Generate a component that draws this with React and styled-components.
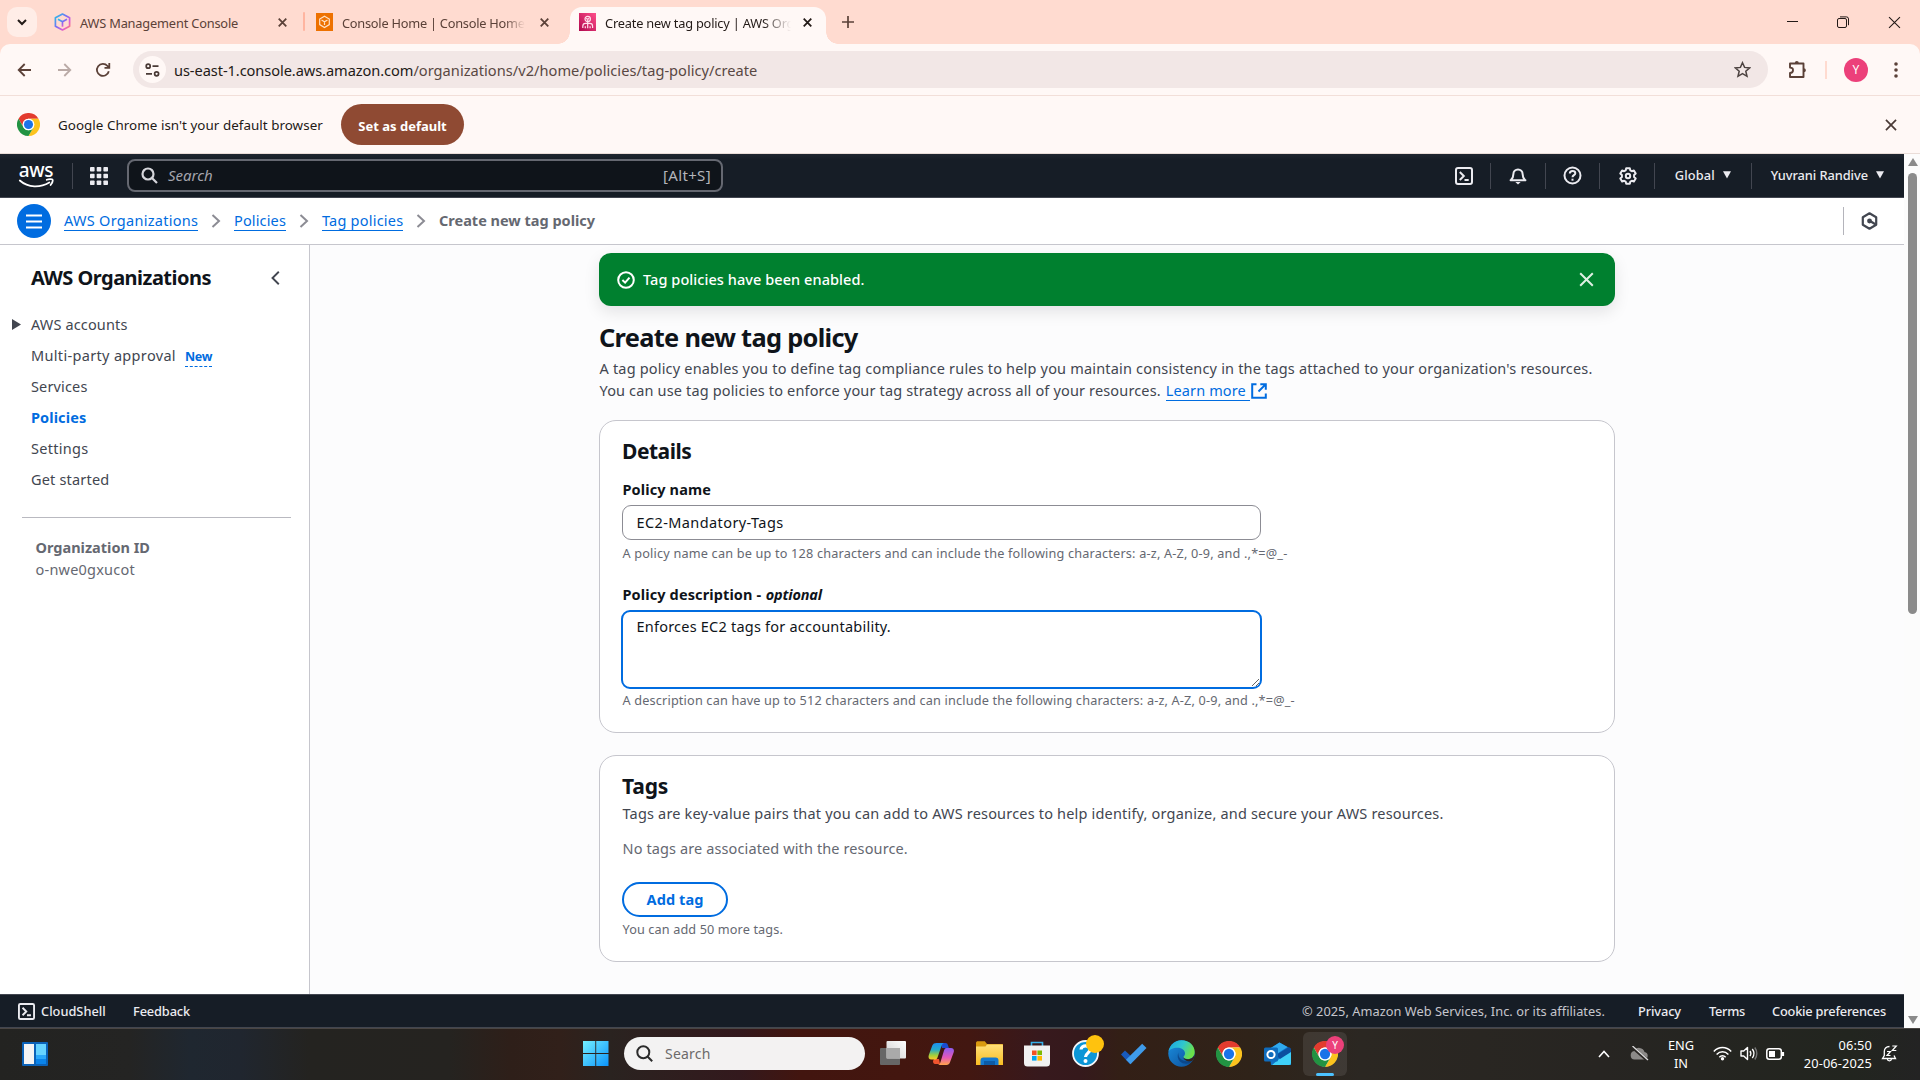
import React from 'react';
import styled, { createGlobalStyle, css } from 'styled-components';

const GlobalStyle = createGlobalStyle`
  * { box-sizing: border-box; }
  html, body { margin: 0; padding: 0; overflow: hidden; }
  body { font-family: "Noto Sans", "Open Sans", sans-serif; color: #0f141a; }
  svg { display: block; flex: none; }
  h1, h2, p { margin: 0; }
  button, input, textarea { font-family: inherit; }
`;

const Screen = styled.div`
  width: 1920px;
  height: 1080px;
  display: flex;
  flex-direction: column;
  overflow: hidden;
  background: #fff;
`;

/* ---------- Browser chrome ---------- */
const BrowserHead = styled.header`
  flex: none;
  background: #ffdbd0;
`;

const TabStrip = styled.div`
  height: 44px;
  display: flex;
  align-items: flex-start;
  padding-left: 7px;
`;

const TabSearch = styled.button`
  width: 30px;
  height: 30px;
  margin: 7px 0 0;
  padding: 0;
  border: 0;
  border-radius: 10px;
  background: #ffede7;
  display: grid;
  place-items: center;
`;

const Tab = styled.div`
  position: relative;
  display: flex;
  align-items: center;
  width: ${p => p.$width}px;
  height: 37px;
  margin-top: 7px;
  padding: 0 10px 7px ${p => p.$pad}px;
  border-radius: 12px 12px 0 0;
  background: ${p => (p.$active ? '#fff8f6' : 'transparent')};
  ${p => p.$active && css`
    &::before, &::after {
      content: '';
      position: absolute;
      bottom: 0;
      width: 12px;
      height: 12px;
    }
    &::before { left: -12px; background: radial-gradient(circle at 0 0, transparent 11.5px, #fff8f6 12px); }
    &::after { right: -12px; background: radial-gradient(circle at 100% 0, transparent 11.5px, #fff8f6 12px); }
  `}
`;

const TabTitle = styled.span`
  flex: none;
  width: ${p => p.$width}px;
  margin-left: 9px;
  white-space: nowrap;
  font-size: 12.8px;
  line-height: 20px;
  letter-spacing: ${p => p.$ls}px;
  padding-top: 1px;
  color: ${p => (p.$active ? '#231a17' : '#5b4138')};
  ${p => p.$fade && css`
    mask-image: linear-gradient(to right, #000 calc(100% - ${p.$fade}px), transparent);
  `}
`;

const TabClose = styled.span`
  margin-left: ${p => p.$gap}px;
`;

const TabDivider = styled.i`
  width: 2px;
  height: 19px;
  margin-top: 12px;
  border-radius: 1px;
  background: #ffb5a0;
`;

const NewTab = styled.span`
  margin: 16px 0 0 16px;
`;

const WindowButtons = styled.div`
  display: flex;
  align-items: center;
  gap: 38px;
  height: 44px;
  margin-left: auto;
  padding-right: 19px;
`;

const Toolbar = styled.div`
  height: 52px;
  display: flex;
  align-items: center;
  padding: 0 14px 0 16px;
  border-radius: 10px 10px 0 0;
  background: #fff8f6;
  border-bottom: 1px solid #f2dfd9;
`;

const NavButtons = styled.div`
  display: flex;
  gap: 21px;
`;

const AddressBar = styled.div`
  display: flex;
  flex: none;
  align-items: center;
  width: 1635px;
  height: 37px;
  margin-left: 21px;
  padding: 0 17px 0 6px;
  border-radius: 19px;
  background: #f2e7e6;
`;

const SiteChip = styled.span`
  width: 27px;
  height: 27px;
  border-radius: 50%;
  background: #fff8f6;
  display: grid;
  place-items: center;
`;

const Address = styled.span`
  flex: 1;
  margin-left: 8px;
  white-space: nowrap;
  font-size: 14.6px;
  line-height: 22px;
  letter-spacing: -0.07px;
  color: #231a17;
`;

const AddressPath = styled.span`
  letter-spacing: 0.03px;
  color: #594743;
`;

const ToolbarEnd = styled.div`
  display: flex;
  align-items: center;
  margin-left: 20px;
`;

const ToolbarDivider = styled.i`
  width: 2px;
  height: 18px;
  margin-left: 18px;
  background: #ffdbd0;
`;

const Avatar = styled.span`
  width: 24px;
  height: 24px;
  margin-left: 17px;
  margin-right: 18px;
  border-radius: 50%;
  background: #ec407a;
  color: #fff;
  font-size: 12px;
  line-height: 24px;
  text-align: center;
`;

const InfoBar = styled.div`
  display: flex;
  align-items: center;
  height: 58px;
  padding: 0 23px 0 17px;
  background: #fff8f6;
  border-bottom: 1px solid #eaddd8;
`;

const InfoText = styled.span`
  width: 266px;
  margin-left: 18px;
  white-space: nowrap;
  font-size: 13.4px;
  letter-spacing: 0.04px;
  color: #231a17;
`;

const DefaultButton = styled.button`
  width: 123px;
  height: 41px;
  margin-left: 17px;
  margin-right: auto;
  padding: 2px 0 0;
  border: 0;
  border-radius: 21px;
  background: #8f4a33;
  color: #fff;
  font-size: 13px;
  font-weight: 700;
  letter-spacing: 0;
`;

/* ---------- Console ---------- */
const Viewport = styled.div`
  height: 874px;
  flex: none;
  display: flex;
`;

const Console = styled.div`
  width: 1904px;
  display: flex;
  flex-direction: column;
`;

const ScrollTrack = styled.div`
  width: 16px;
  display: flex;
  flex-direction: column;
  align-items: center;
  padding: 4px 0 4px 1px;
  background: #fcfcfc;
`;

const ScrollThumb = styled.div`
  width: 9px;
  height: 441px;
  margin: 7px 0 auto;
  border-radius: 5px;
  background: #8b8b8b;
`;

const GlobalNav = styled.nav`
  height: 44px;
  flex: none;
  display: flex;
  align-items: center;
  background: linear-gradient(#1f2630, #161d26 6px);
  border-bottom: 1px solid #424650;
  padding-left: 18px;
  color: #ebebf0;
`;

const Logo = styled.div`
  width: 36px;
  height: 30px;
  display: flex;
  flex-direction: column;
  align-items: center;
  font-size: 19px;
  font-weight: 500;
  line-height: 18px;
  letter-spacing: -0.3px;
  color: #fff;
`;

const LogoSmile = styled.svg`
  margin-top: -1px;
`;

const NavDivider = styled.i`
  width: 1px;
  height: 26px;
  background: #424650;
  margin: 0 ${p => p.$right}px 0 ${p => p.$left}px;
`;

const SearchBox = styled.div`
  display: flex;
  align-items: center;
  width: 596px;
  height: 33px;
  margin-left: 19px;
  padding: 0 10px 0 12px;
  border: 2px solid #656871;
  border-radius: 8px;
  background: #0f141a;
`;

const SearchHint = styled.em`
  flex: 1;
  margin: 0 0 2px 10px;
  font-size: 15px;
  line-height: 22px;
  color: #a4a4ad;
`;

const SearchKey = styled.span`
  margin-bottom: 2px;
  font-size: 15px;
  line-height: 22px;
  letter-spacing: 0.35px;
  color: #b4b4bb;
`;

const NavEnd = styled.div`
  display: flex;
  align-items: center;
  margin-left: auto;
  padding-right: 20px;
`;

const NavMenu = styled.span`
  display: flex;
  align-items: center;
  gap: 8px;
  margin-bottom: 2px;
  white-space: nowrap;
  font-size: 12.8px;
  line-height: 20px;
  font-weight: 500;
  letter-spacing: ${p => p.$ls}px;
`;

const BreadcrumbBar = styled.div`
  height: 47px;
  flex: none;
  display: flex;
  align-items: center;
  padding: 0 26px 0 17px;
  background: #fff;
  border-bottom: 1px solid #c6c6cd;
`;

const MenuButton = styled.button`
  width: 34px;
  height: 34px;
  margin-right: 13px;
  padding: 0;
  border: 0;
  border-radius: 50%;
  background: #006ce0;
  display: grid;
  place-items: center;
`;

const Crumb = styled.a`
  width: ${p => p.$width}px;
  white-space: nowrap;
  font-size: 14.5px;
  line-height: 20px;
  letter-spacing: ${p => p.$ls}px;
  color: #006ce0;
  border-bottom: 1px solid #006ce0;
  margin-bottom: 1px;
`;

const CrumbCurrent = styled.span`
  margin-bottom: 2px;
  font-size: 14.5px;
  line-height: 22px;
  font-weight: 700;
  color: #656871;
`;

const CrumbArrow = styled.svg`
  margin: 0 13px;
`;

const HelpSlot = styled.div`
  display: flex;
  align-items: center;
  height: 28px;
  margin-left: auto;
  padding-left: 17px;
  border-left: 1px solid #b4b4bb;
`;

const Body = styled.div`
  flex: 1;
  min-height: 0;
  display: flex;
`;

const Sidebar = styled.aside`
  width: 310px;
  flex: none;
  padding-top: 20px;
  background: #fff;
  border-right: 1px solid #c6c6cd;
`;

const SidebarHead = styled.div`
  display: flex;
  align-items: center;
  justify-content: space-between;
  height: 26px;
  margin-bottom: 17px;
  padding: 0 29px 0 31px;
`;

const SidebarTitle = styled.h2`
  font-size: 20px;
  line-height: 26px;
  letter-spacing: -0.52px;
  white-space: nowrap;
`;

const NavItem = styled.div`
  display: flex;
  align-items: center;
  height: 31px;
  padding-left: ${p => (p.$expandable ? 12 : 31)}px;
  font-size: 14.5px;
  letter-spacing: ${p => p.$ls}px;
  font-weight: ${p => (p.$active ? 700 : 400)};
  color: ${p => (p.$active ? '#006ce0' : '#424650')};
  svg { margin: 2px 10px 0 0; }
`;

const NewBadge = styled.span`
  margin-left: 9px;
  margin-top: 5px;
  font-size: 12.5px;
  line-height: 17px;
  font-weight: 700;
  letter-spacing: -0.3px;
  color: #006ce0;
  border-bottom: 1px dashed #006ce0;
  padding-bottom: 1px;
`;

const SidebarRule = styled.hr`
  width: 269px;
  height: 1px;
  margin: 23px 0 18px 22px;
  border: 0;
  background: #b9b9c0;
`;

const OrgInfo = styled.div`
  padding-left: 35.5px;
  font-size: 14.5px;
  line-height: 22px;
  color: #656871;
  span { letter-spacing: 0.22px; }
`;

const Main = styled.main`
  flex: 1;
  display: flex;
  flex-direction: column;
  padding: 8px 289px 0;
  background: #fcfcfd;
`;

const Flash = styled.div`
  display: flex;
  align-items: center;
  height: 53px;
  flex: none;
  padding: 0 21px 0 18px;
  border-radius: 12px;
  background: #00802f;
  box-shadow: 0 6px 16px rgba(0, 7, 22, 0.1);
  color: #fff;
`;

const FlashText = styled.span`
  flex: 1;
  margin: 0 0 2px 8px;
  font-size: 14.5px;
  line-height: 22px;
  font-weight: 500;
  letter-spacing: 0.07px;
`;

const PageTitle = styled.h1`
  margin-top: 16px;
  font-size: 25.4px;
  line-height: 30px;
  letter-spacing: -0.7px;
`;

const PageIntro = styled.p`
  height: 44px;
  margin-top: 5px;
  font-size: 14.5px;
  line-height: 22px;
  white-space: nowrap;
  color: #424650;
`;

const IntroLine = styled.span`
  display: flex;
  align-items: center;
  height: 22px;
  padding-left: 0.5px;
  letter-spacing: ${p => p.$ls}px;
  svg { margin-top: 2px; }
`;

const LearnMore = styled.a`
  width: 84px;
  height: 21px;
  margin: 0 1px 0 5px;
  line-height: 20px;
  letter-spacing: 0.12px;
  color: #006ce0;
  border-bottom: 1px solid #006ce0;
`;

const Card = styled.section`
  flex: none;
  height: ${p => p.$height}px;
  margin-top: ${p => p.$gap}px;
  padding: 16px 22px;
  border: 1px solid #c6c6cd;
  border-radius: 17px;
  background: #fff;
`;

const CardTitle = styled.h2`
  font-size: 21px;
  line-height: 28px;
  letter-spacing: ${p => p.$ls}px;
`;

const CardText = styled.p`
  margin-top: ${p => p.$gap}px;
  padding-left: 0.5px;
  font-size: 14.5px;
  line-height: 22px;
  letter-spacing: ${p => p.$ls}px;
  white-space: nowrap;
  color: ${p => (p.$muted ? '#656871' : '#424650')};
`;

const FieldLabel = styled.label`
  display: block;
  margin-top: ${p => p.$gap}px;
  padding-left: 0.5px;
  font-size: 14.5px;
  line-height: 22px;
  font-weight: 700;
  letter-spacing: 0.12px;
  em { margin-left: 0.5px; letter-spacing: -0.15px; }
`;

const TextInput = styled.input`
  display: block;
  width: 639px;
  height: 35px;
  margin-top: 5px;
  padding: 0 13.5px 2px;
  border: 1px solid #8c8c94;
  border-radius: 9px;
  outline: 0;
  background: #fff;
  color: #0f141a;
  font-size: 14.5px;
  letter-spacing: 0.4px;
`;

const TextArea = styled.textarea`
  display: block;
  width: 641px;
  height: 79px;
  margin: 5px 0 0 -1px;
  padding: 3px 13.5px;
  border: 2px solid #006ce0;
  border-radius: 9px;
  outline: 0;
  resize: both;
  background: #fff;
  color: #0f141a;
  font-size: 14.5px;
  line-height: 22px;
  letter-spacing: 0.22px;
`;

const Hint = styled.p`
  margin-top: ${p => p.$gap}px;
  padding-left: 0.5px;
  font-size: 12.7px;
  line-height: 18px;
  letter-spacing: ${p => p.$ls}px;
  white-space: nowrap;
  color: #656871;
`;

const AddButton = styled.button`
  display: block;
  width: 106px;
  height: 35px;
  margin-top: 23px;
  padding: 0 0 2px;
  border: 2px solid #006ce0;
  border-radius: 18px;
  background: #fff;
  color: #006ce0;
  font-size: 14.5px;
  font-weight: 700;
  letter-spacing: 0.1px;
`;

const ConsoleFooter = styled.footer`
  height: 34px;
  flex: none;
  display: flex;
  align-items: center;
  padding: 0 18px;
  background: #161d26;
  border-top: 1px solid #424650;
  border-bottom: 1px solid #424650;
  font-size: 12.8px;
  white-space: nowrap;
  color: #ebebf0;
`;

const FooterLink = styled.span`
  width: ${p => p.$width}px;
  margin-left: ${p => p.$gap}px;
  font-weight: 500;
  letter-spacing: ${p => p.$ls}px;
`;

const Copyright = styled.span`
  width: 303px;
  margin-left: auto;
  letter-spacing: 0.03px;
  color: #c6c6cd;
`;

/* ---------- Taskbar ---------- */
const Taskbar = styled.div`
  flex: 1;
  display: flex;
  align-items: center;
  border-top: 1px solid #4a4643;
  padding: 0 22px 2px 22px;
  color: #fff;
  background: linear-gradient(90deg, #232321 0, #242423 130px, #1f2730 190px, #20262f 240px, #242320 310px, #252320 450px,
    #2e1f19 510px, #31201a 560px, #2a2320 610px, #33191d 740px, #42150f 800px, #43160f 900px, #421711 970px,
    #37191d 1040px, #35191c 1080px, #331f16 1120px, #2f2319 1250px, #2b2722 1360px, #272522 1600px, #22251f 1850px, #232323 1920px);
`;

const TaskSearch = styled.div`
  display: flex;
  align-items: center;
  width: 241px;
  height: 33px;
  margin: 0 15px 0 15px;
  padding-left: 12px;
  border-radius: 17px;
  background: #f3f2f2;
  span { margin: 0 0 1px 12px; font-size: 14px; letter-spacing: 0.2px; color: #6c6a6a; }
`;

const Widgets = styled.div`
  width: 561px;
`;

const AppRow = styled.div`
  display: flex;
  align-items: center;
  gap: 22px;
`;

const AppSlot = styled.div`
  position: relative;
  width: 26px;
  height: 28px;
  display: grid;
  place-items: center;
`;

const ActiveApp = styled.div`
  position: relative;
  width: 44px;
  height: 44px;
  margin-left: -9px;
  padding-top: 9px;
  border-radius: 6px;
  background: rgba(255, 255, 255, 0.09);
  display: flex;
  flex-direction: column;
  align-items: center;
  justify-content: space-between;
`;

const ActiveLine = styled.i`
  width: 18px;
  height: 3px;
  border-radius: 2px;
  background: #4cc2ff;
`;

const AppBadge = styled.span`
  position: absolute;
  top: ${p => p.$top}px;
  right: ${p => p.$right}px;
  width: 18px;
  height: 18px;
  border-radius: 50%;
  background: ${p => p.$color};
  font-size: 10px;
  line-height: 18px;
  text-align: center;
`;

const Tray = styled.div`
  display: flex;
  align-items: center;
  margin-left: auto;
  white-space: nowrap;
`;

const TrayStack = styled.div`
  width: ${p => p.$width}px;
  margin: 0 ${p => p.$right}px 0 ${p => p.$left}px;
  font-size: 12.8px;
  line-height: 18px;
  letter-spacing: ${p => p.$ls || 0}px;
  text-align: ${p => p.$align};
`;

const TrayIcons = styled.div`
  display: flex;
  align-items: center;
  gap: 8px;
`;

/* ---------- Icons ---------- */
const Cross = ({ size, color, width = 2 }) => (
  <svg width={size} height={size} viewBox="0 0 10 10" stroke={color} strokeWidth={(width * 10) / size} fill="none">
    <path d="M.8.8l8.4 8.4M9.2.8L.8 9.2" />
  </svg>
);

const ChromeLogo = ({ size }) => (
  <svg width={size} height={size} viewBox="0 0 48 48">
    <circle cx="24" cy="24" r="23" fill="#fff" />
    <path d="M3.2 12A24 24 0 0 1 44.8 12H24a12 12 0 0 0-10.4 18z" fill="#e33b2e" />
    <path d="M44.8 12A24 24 0 0 1 24 48l10.4-18A12 12 0 0 0 24 12z" fill="#fcc31e" />
    <path d="M24 48A24 24 0 0 1 3.2 12l10.4 18a12 12 0 0 0 20.8 0z" fill="#229342" />
    <circle cx="24" cy="24" r="12" fill="#fff" />
    <circle cx="24" cy="24" r="9.5" fill="#1a73e8" />
  </svg>
);

const CubeIcon = () => (
  <svg width="17" height="18" viewBox="0 0 17 18" fill="none" stroke="url(#cube)" strokeWidth="1.7" strokeLinejoin="round">
    <defs>
      <linearGradient id="cube" x1="0" y1="0" x2="1" y2="1">
        <stop offset="0" stopColor="#1fc7e8" />
        <stop offset=".45" stopColor="#7a6cf5" />
        <stop offset=".75" stopColor="#e15cd0" />
        <stop offset="1" stopColor="#ff8a5c" />
      </linearGradient>
    </defs>
    <path d="M8.5 1L15.6 4.8v8.4L8.5 17l-7.1-3.8V4.8z" />
    <path d="M4 6.2l4.5 2.5L13 6.2M8.5 8.7v5.1" />
  </svg>
);

const ConsoleHomeIcon = () => (
  <svg width="17" height="18" viewBox="0 0 17 18">
    <rect width="17" height="18" fill="#ed7100" />
    <path d="M8.5 3.2l4.8 2.8v5.6l-4.8 2.9-4.8-2.9V6zM5.5 7l3 1.7 3-1.7M8.5 8.7v3.4" fill="none" stroke="#ffe2c7" strokeWidth="1.2" />
  </svg>
);

const OrganizationsIcon = () => (
  <svg width="17" height="18" viewBox="0 0 17 18">
    <defs>
      <linearGradient id="org" x1="0" y1="1" x2="1" y2="0">
        <stop offset="0" stopColor="#b0084d" />
        <stop offset="1" stopColor="#ff4f8b" />
      </linearGradient>
    </defs>
    <rect width="17" height="18" fill="url(#org)" />
    <g fill="none" stroke="#ffe0ec" strokeWidth="1.2">
      <circle cx="8.7" cy="6" r="2.7" />
      <path d="M7.2 5.4l1.5.8 1.5-.8M8.7 6.2v9M3.8 15v-1.8c0-1.8 1.2-2.8 2.8-2.8h4.2c1.6 0 2.8 1 2.8 2.8V15M6.3 15.3v-2.1M11.1 15.3v-2.1" />
    </g>
  </svg>
);

const ShellIcon = ({ size, radius = 2 }) => (
  <svg width={size} height={size} viewBox="0 0 18 18" fill="none" stroke="#ebebf0" strokeWidth="2">
    <rect x="1" y="1" width="16" height="16" rx={radius} />
    <path d="M4.8 5l4 4-4 4M9.5 13h4.2" />
  </svg>
);

const Caret = () => (
  <svg width="8" height="8" viewBox="0 0 8 8"><path d="M0 .3h8L4 7.6z" fill="#ebebf0" /></svg>
);

const Arrow = ({ flip }) => (
  <svg width="18" height="18" viewBox="0 0 18 18" fill="none" stroke={flip ? '#baaaa6' : '#5b4138'} strokeWidth="1.8">
    {flip ? <path d="M3 9h12M9.3 3l6 6-6 6" /> : <path d="M15 9H3M8.7 3l-6 6 6 6" />}
  </svg>
);

const Chevron = () => (
  <CrumbArrow width="10" height="14" viewBox="0 0 10 14" fill="none" stroke="#8c8c94" strokeWidth="2">
    <path d="M1.5 1L8 7l-6.5 6" />
  </CrumbArrow>
);

const GearIcon = () => (
  <svg width="18" height="18" viewBox="0 0 18 18" fill="none" stroke="#ebebf0" strokeWidth="2" strokeLinejoin="round">
    <path d="M7.2 1.2h3.6l.5 2.2 1.5.8 2.1-.7 1.8 3-1.6 1.5v2l1.6 1.5-1.8 3-2.1-.7-1.5.8-.5 2.2H7.2l-.5-2.2-1.5-.8-2.1.7-1.8-3L2.900 10V8L1.300 6.500l1.800-3 2.100.7 1.500-.8z" />
    <circle cx="9" cy="9" r="2.2" />
  </svg>
);

const tabs = [
  { title: 'AWS Management Console', icon: <CubeIcon />, width: 266, pad: 17, text: 166, gap: 32, ls: -0.18 },
  { title: 'Console Home | Console Home', icon: <ConsoleHomeIcon />, width: 265, pad: 11, text: 183, gap: 15, ls: -0.25, fade: 20 },
  { title: 'Create new tag policy | AWS Org', icon: <OrganizationsIcon />, width: 256, pad: 9, text: 186, gap: 12, ls: -0.2, fade: 28, active: true },
];

const navItems = [
  { label: 'AWS accounts', ls: 0.14, expandable: true },
  { label: 'Multi-party approval', ls: 0.33, badge: 'New' },
  { label: 'Services', ls: 0.15 },
  { label: 'Policies', ls: 0.1, active: true },
  { label: 'Settings', ls: 0.29 },
  { label: 'Get started', ls: 0.18 },
];

const BrowserChrome = () => (
  <BrowserHead>
    <TabStrip>
      <TabSearch>
        <svg width="10" height="7" viewBox="0 0 10 7" fill="none" stroke="#231a17" strokeWidth="2"><path d="M1 1l4 4 4-4" /></svg>
      </TabSearch>
      {tabs.map((t, i) => (
        <React.Fragment key={t.title}>
          {i === 1 && <TabDivider />}
          <Tab $width={t.width} $pad={t.pad} $active={t.active}>
            {t.icon}
            <TabTitle $width={t.text} $ls={t.ls} $fade={t.fade} $active={t.active}>{t.title}</TabTitle>
            <TabClose $gap={t.gap}><Cross size={9} width={1.8} color={t.active ? '#231a17' : '#5b4138'} /></TabClose>
          </Tab>
        </React.Fragment>
      ))}
      <NewTab>
        <svg width="12" height="12" viewBox="0 0 12 12" stroke="#5b4138" strokeWidth="1.7"><path d="M6 0v12M0 6h12" /></svg>
      </NewTab>
      <WindowButtons>
        <svg width="12" height="12" viewBox="0 0 12 12" stroke="#231a17"><path d="M0 5.5h11" /></svg>
        <svg width="13" height="13" viewBox="0 0 13 13" fill="none" stroke="#231a17"><rect x=".5" y="2.5" width="9" height="9" rx="1.5" /><path d="M3 .9h6.5a2 2 0 0 1 2 2v6.3" /></svg>
        <Cross size={13} width={1.1} color="#231a17" />
      </WindowButtons>
    </TabStrip>
    <Toolbar>
      <NavButtons>
        <Arrow />
        <Arrow flip />
        <svg width="18" height="18" viewBox="0 0 18 18" fill="none" stroke="#5b4138" strokeWidth="1.8">
          <path d="M14.8 10.2A6 6 0 1 1 13.5 5l1.3 1.5M15.3 2v4.8h-4.8" />
        </svg>
      </NavButtons>
      <AddressBar>
        <SiteChip>
          <svg width="15" height="14" viewBox="0 0 15 14" fill="none" stroke="#4a3a36" strokeWidth="1.7">
            <circle cx="3.2" cy="3.2" r="2" /><path d="M7.5 3.2h6M1 10.800h6" /><circle cx="11.6" cy="10.8" r="2" />
          </svg>
        </SiteChip>
        <Address>us-east-1.console.aws.amazon.com<AddressPath>/organizations/v2/home/policies/tag-policy/create</AddressPath></Address>
        <svg width="17" height="17" viewBox="0 0 17 17" fill="none" stroke="#4d4341" strokeWidth="1.5">
          <path d="M8.5 1.7l2.1 4.7 5.1.5-3.9 3.4 1.2 5-4.5-2.7L4 15.3l1.2-5L1.3 6.900l5.1-.5z" />
        </svg>
      </AddressBar>
      <ToolbarEnd>
        <svg width="19" height="19" viewBox="0 0 19 19" fill="none" stroke="#5b4138" strokeWidth="1.9" strokeLinejoin="round">
          <path d="M2 3.5h13.5v13.5H2v-4c2.600 0 3-1.200 3-2.700S4.600 7.600 2 7.600z" />
          <path d="M6.800 3.300a2 2.200 0 0 1 4 0zM15.700 8.200a2.200 2 0 0 1 0 4z" fill="#5b4138" stroke="none" />
        </svg>
        <ToolbarDivider />
        <Avatar>Y</Avatar>
        <svg width="20" height="16" viewBox="0 0 20 16" fill="#5b4138"><circle cx="10" cy="2" r="1.8" /><circle cx="10" cy="8" r="1.8" /><circle cx="10" cy="14" r="1.8" /></svg>
      </ToolbarEnd>
    </Toolbar>
    <InfoBar>
      <ChromeLogo size={23} />
      <InfoText>Google Chrome isn't your default browser</InfoText>
      <DefaultButton>Set as default</DefaultButton>
      <Cross size={12} width={1.7} color="#4a3a36" />
    </InfoBar>
  </BrowserHead>
);

const ConsoleNav = () => (
  <GlobalNav>
    <Logo>
      aws
      <LogoSmile width="36" height="11" viewBox="0 0 36 11" fill="none" stroke="#fff" strokeWidth="1.8" strokeLinecap="round">
        <path d="M1.800 2.500c8.600 7.600 20.500 7.300 29.500 2" />
        <path d="M28.800 1.800c2-.9 5.200-.9 5.600-.3.500.8-.2 3.500-1.800 5.500" />
      </LogoSmile>
    </Logo>
    <NavDivider $left={18} $right={17} />
    <svg width="18" height="18" viewBox="0 0 18 18" fill="#ebebf0">
      {[0, 6.7, 13.4].map(y => [0, 6.7, 13.4].map(x => <rect key={`${x}-${y}`} x={x} y={y} width="4.6" height="4.6" rx=".8" />))}
    </svg>
    <SearchBox>
      <svg width="17" height="17" viewBox="0 0 17 17" fill="none" stroke="#d5d5da" strokeWidth="2.2"><circle cx="7" cy="7" r="5.5" /><path d="M11 11l5 5" /></svg>
      <SearchHint>Search</SearchHint>
      <SearchKey>[Alt+S]</SearchKey>
    </SearchBox>
    <NavEnd>
      <ShellIcon size={18} />
      <NavDivider $left={17} $right={18} />
      <svg width="18" height="18" viewBox="0 0 18 18" fill="none" stroke="#ebebf0" strokeWidth="2" strokeLinejoin="round">
        <path d="M4.400 7a4.600 4.600 0 0 1 9.200 0c0 3.800 1 4.500 2.800 6.300H1.600C3.400 11.500 4.400 10.800 4.400 7z" /><path d="M6.300 15h5.400L9 17.600z" fill="#ebebf0" stroke="none" />
      </svg>
      <NavDivider $left={18} $right={17} />
      <svg width="19" height="19" viewBox="0 0 19 19" fill="none" stroke="#ebebf0" strokeWidth="2">
        <circle cx="9.5" cy="9.5" r="8" /><path d="M6.800 7.600c0-3.600 5.500-3.300 5.500-.3 0 2-2.800 1.800-2.800 4" /><path d="M9.500 12.700v2" />
      </svg>
      <NavDivider $left={17} $right={19} />
      <GearIcon />
      <NavDivider $left={17} $right={20} />
      <NavMenu $ls={0.1}>Global<Caret /></NavMenu>
      <NavDivider $left={20} $right={19} />
      <NavMenu $ls={-0.05}>Yuvrani Randive<Caret /></NavMenu>
    </NavEnd>
  </GlobalNav>
);

const Breadcrumbs = () => (
  <BreadcrumbBar>
    <MenuButton>
      <svg width="16" height="15" viewBox="0 0 16 15" stroke="#fff" strokeWidth="2"><path d="M0 1.500h16M0 7.500h16M0 13.500h16" /></svg>
    </MenuButton>
    <Crumb $width={134} $ls={0.29}>AWS Organizations</Crumb>
    <Chevron />
    <Crumb $width={52} $ls={0.14}>Policies</Crumb>
    <Chevron />
    <Crumb $width={81} $ls={0.22}>Tag policies</Crumb>
    <Chevron />
    <CrumbCurrent>Create new tag policy</CrumbCurrent>
    <HelpSlot>
      <svg width="17" height="18" viewBox="0 0 17 18" fill="none" stroke="#424650" strokeWidth="2.2" strokeLinejoin="round">
        <path d="M8.500 1.300l6.700 3.900v7.600l-6.700 3.900-6.700-3.900V5.200z" /><circle cx="8.5" cy="9" r="2.4" fill="#424650" stroke="none" /><path d="M9.500 9.300l4.800 2.900" />
      </svg>
    </HelpSlot>
  </BreadcrumbBar>
);

const SideNavigation = () => (
  <Sidebar>
    <SidebarHead>
      <SidebarTitle>AWS Organizations</SidebarTitle>
      <svg width="9" height="14" viewBox="0 0 9 14" fill="none" stroke="#424650" strokeWidth="1.9"><path d="M7.800.8L1.500 7l6.300 6.200" /></svg>
    </SidebarHead>
    {navItems.map(n => (
      <NavItem key={n.label} $ls={n.ls} $active={n.active} $expandable={n.expandable}>
        {n.expandable && <svg width="9" height="11" viewBox="0 0 9 11"><path d="M0 0l9 5.500L0 11z" fill="#424650" /></svg>}
        {n.label}
        {n.badge && <NewBadge>{n.badge}</NewBadge>}
      </NavItem>
    ))}
    <SidebarRule />
    <OrgInfo>
      <b>Organization ID</b><br />
      <span>o-nwe0gxucot</span>
    </OrgInfo>
  </Sidebar>
);

const PolicyForm = () => (
  <Main>
    <Flash>
      <svg width="18" height="18" viewBox="0 0 18 18" fill="none" stroke="#fff" strokeWidth="2"><circle cx="9" cy="9" r="7.8" /><path d="M5.400 9l2.700 2.600 4.400-5" /></svg>
      <FlashText>Tag policies have been enabled.</FlashText>
      <Cross size={15} width={2} color="#dff0e4" />
    </Flash>
    <PageTitle>Create new tag policy</PageTitle>
    <PageIntro>
      <IntroLine $ls={0.184}>A tag policy enables you to define tag compliance rules to help you maintain consistency in the tags attached to your organization's resources.</IntroLine>
      <IntroLine $ls={0.155}>
        You can use tag policies to enforce your tag strategy across all of your resources.
        <LearnMore>Learn more</LearnMore>
        <svg width="16" height="16" viewBox="0 0 16 16" fill="none" stroke="#006ce0" strokeWidth="2">
          <path d="M5.500 1.200H1.200v13.600h13.600v-4.300M9.300 1.200h5.500v5.500M14.600 1.400L7.500 8.500" />
        </svg>
      </IntroLine>
    </PageIntro>
    <Card $height={313} $gap={19}>
      <CardTitle $ls={-0.48}>Details</CardTitle>
      <FieldLabel $gap={13}>Policy name</FieldLabel>
      <TextInput defaultValue="EC2-Mandatory-Tags" />
      <Hint $gap={4} $ls={0.182}>A policy name can be up to 128 characters and can include the following characters: a-z, A-Z, 0-9, and .,*=@_-</Hint>
      <FieldLabel $gap={21}>Policy description - <em>optional</em></FieldLabel>
      <TextArea defaultValue="Enforces EC2 tags for accountability." />
      <Hint $gap={2} $ls={0.168}>A description can have up to 512 characters and can include the following characters: a-z, A-Z, 0-9, and .,*=@_-</Hint>
    </Card>
    <Card $height={207} $gap={22}>
      <CardTitle $ls={-0.15}>Tags</CardTitle>
      <CardText $gap={2} $ls={0.184}>Tags are key-value pairs that you can add to AWS resources to help identify, organize, and secure your AWS resources.</CardText>
      <CardText $gap={13} $ls={0.115} $muted>No tags are associated with the resource.</CardText>
      <AddButton>Add tag</AddButton>
      <Hint $gap={3} $ls={0.12}>You can add 50 more tags.</Hint>
    </Card>
  </Main>
);

const AppIcons = () => (
  <AppRow>
    <AppSlot>
      <svg width="26" height="25" viewBox="0 0 26 25">
        <defs>
          <linearGradient id="tvf" x1="1" y1="0" x2="0" y2="1"><stop offset="0" stopColor="#fff" /><stop offset="1" stopColor="#cfcfcf" /></linearGradient>
        </defs>
        <rect y="7" width="20" height="17" rx="1" fill="#666" /><rect x="6.5" width="19.5" height="17.5" rx="1" fill="url(#tvf)" /><path d="M6.500 7H20v10.500H6.500z" fill="#aaa" />
      </svg>
    </AppSlot>
    <AppSlot>
      <svg width="26" height="24" viewBox="0 0 26 24">
        <defs>
          <linearGradient id="cpa" x1="0" y1="0" x2="0" y2="1"><stop offset="0" stopColor="#1b8ff0" /><stop offset=".4" stopColor="#25a9c9" /><stop offset=".75" stopColor="#a4cf3b" /><stop offset="1" stopColor="#ffc928" /></linearGradient>
          <linearGradient id="cpb" x1="0" y1="0" x2="0" y2="1"><stop offset="0" stopColor="#8b5cf0" /><stop offset=".55" stopColor="#e457b8" /><stop offset="1" stopColor="#ffa44a" /></linearGradient>
        </defs>
        <path d="M13 1h4.500c1.500 0 2 .8 2.400 2l1 3H14z" fill="#1a4bd0" />
        <path d="M7 22h5l-1-5H6l-1 2c0 2 .8 3 2 3z" fill="#f1552f" />
        <path d="M8.500 1H16c-1.500.5-2 1.500-2.500 3l-4 11.500c-.5 1.500-1.300 2-2.500 2H3.500C.8 17.500 0 15.500.8 13L4.300 3.500C5 1.800 6.500 1 8.500 1z" fill="url(#cpa)" />
        <path d="M18.500 6H23c2.500 0 3.400 2 2.700 4.300L22 20.300c-.7 1.800-1.700 2.700-3.500 2.700H10c1.500-.4 2-1.500 2.500-3L16 8.500c.6-1.700 1.300-2.500 2.500-2.500z" fill="url(#cpb)" />
      </svg>
    </AppSlot>
    <AppSlot>
      <svg width="27" height="25" viewBox="0 0 27 25">
        <defs><linearGradient id="fold" x1="0" y1="0" x2="0" y2="1"><stop offset="0" stopColor="#ffe07a" /><stop offset="1" stopColor="#f9bd22" /></linearGradient></defs>
        <path d="M0 2C0 .8.800.3 1.800.3h7L11 3h16v6H0z" fill="#d99a10" /><path d="M0 5.500h9.500L11 3.500h15a1 1 0 0 1 1 1V24H0z" fill="url(#fold)" />
        <path d="M4.500 24v-4.500a3 3 0 0 1 3-3h12a3 3 0 0 1 3 3V24z" fill="#1479cf" /><path d="M8 20h11v4H8z" fill="#0d5ba6" />
      </svg>
    </AppSlot>
    <AppSlot>
      <svg width="26" height="26" viewBox="0 0 26 26">
        <path d="M7.500 5V1.500h11V5" fill="none" stroke="#37b0e8" strokeWidth="1.6" /><path d="M0 4.500h26V22a3.500 3.500 0 0 1-3.500 3.500h-19A3.500 3.500 0 0 1 0 22z" fill="#f1f1f1" />
        <path d="M8 9.500h4.600v4.600H8z" fill="#f25022" /><path d="M13.400 9.500H18v4.600h-4.600z" fill="#7fba00" /><path d="M8 15h4.600v4.600H8z" fill="#00a4ef" /><path d="M13.400 15H18v4.600h-4.600z" fill="#ffb900" />
      </svg>
    </AppSlot>
    <AppSlot>
      <svg width="27" height="27" viewBox="0 0 27 27">
        <circle cx="13.5" cy="13.5" r="12.5" fill="#0c96d6" stroke="#f4f7f9" strokeWidth="1.8" />
        <path d="M9 9.500c.3-5 9-4.800 9 0 0 3.600-4.500 3.700-4.500 7.500" fill="none" stroke="#fff" strokeWidth="3.2" /><circle cx="13.5" cy="21" r="2" fill="#fff" />
      </svg>
      <AppBadge $top={-5} $right={-6} $color="#ffc20e" />
    </AppSlot>
    <AppSlot>
      <svg width="27" height="22" viewBox="0 0 27 22"><path d="M1 11.500l4-4 9 8.500-4 5z" fill="#185abd" /><path d="M6 16.800L22.200.8l4.300 4.300L10.500 21.300z" fill="#3f9bea" /></svg>
    </AppSlot>
    <AppSlot>
      <svg width="27" height="27" viewBox="0 0 27 27">
        <defs>
          <linearGradient id="eg" x1="0" y1="0" x2="1" y2=".4"><stop offset="0" stopColor="#1ba3e0" /><stop offset=".55" stopColor="#2fc6cf" /><stop offset="1" stopColor="#6be04a" /></linearGradient>
          <linearGradient id="eb" x1="0" y1="0" x2="1" y2="1"><stop offset="0" stopColor="#1b8fe0" /><stop offset="1" stopColor="#0c4d97" /></linearGradient>
        </defs>
        <circle cx="13.5" cy="13.5" r="13.2" fill="url(#eb)" />
        <path d="M.5 11.500C2 4.500 7.500.3 13.500.3c8 0 13.200 5.700 13.200 11.700 0 4.500-3.200 7-7 7-2.800 0-4.200-1-4.200-2 0-.9 1.500-1.300 1.500-3.700 0-3-3-5.600-7.500-5.600-4.800 0-8 2-9 3.800z" fill="url(#eg)" />
        <path d="M10.500 12.500c-1 6.500 5.500 10.500 13 8l-1.300 2.300c-3 1.500-7.500 1.200-10.200-1.300-2.500-2.300-3-6-1.500-9z" fill="#0a3f80" opacity=".75" />
        <path d="M15.500 17c0 1.500 3 3 7 1.700 1.500-.5 3-1.700 3.800-3.700.3 3-1 5-2.300 6-5 1-8.500-1-8.500-4z" fill="#33241b" />
      </svg>
    </AppSlot>
    <AppSlot><ChromeLogo size={26} /></AppSlot>
    <AppSlot>
      <svg width="27" height="24" viewBox="0 0 27 24">
        <path d="M5 7L15.500.5 27 7v16H7z" fill="#1173c7" /><path d="M15.500.5l8 4.500L11 13l-6-3V7z" fill="#2fa9ee" /><path d="M27 7v14a2 2 0 0 1-2 2H8z" fill="#3fd0f8" /><path d="M12 13l13-8 2 2v3L16 17z" fill="#0b4fa0" />
        <rect y="5.5" width="14" height="14" rx="1.5" fill="#0f6cbd" /><circle cx="7" cy="12.5" r="3.6" fill="none" stroke="#fff" strokeWidth="2" />
      </svg>
    </AppSlot>
    <ActiveApp>
      <ChromeLogo size={26} />
      <AppBadge $top={4} $right={3} $color="#ec407a">Y</AppBadge>
      <ActiveLine />
    </ActiveApp>
  </AppRow>
);

const WindowsTaskbar = () => (
  <Taskbar>
    <Widgets>
      <svg width="26" height="24" viewBox="0 0 26 24">
        <rect width="26" height="24" rx="1" fill="#0b62b8" /><path d="M2 2h10v20H2z" fill="#f4f4f4" /><path d="M14 2h10v11H14z" fill="#66d3ff" /><path d="M14 13h10v4H14z" fill="#2aa8fa" /><path d="M14 17h10v5H14z" fill="#0a84ea" />
      </svg>
    </Widgets>
    <svg width="26" height="25" viewBox="0 0 26 25">
      <defs><linearGradient id="win" gradientUnits="userSpaceOnUse" x1="0" y1="0" x2="26" y2="25"><stop offset="0" stopColor="#74efff" /><stop offset="1" stopColor="#0a93fb" /></linearGradient></defs>
      <path d="M0 0h12.300v12H0zM13.200 0h12.300v12H13.200zM0 13h12.300v12H0zM13.200 13h12.300v12H13.200z" fill="url(#win)" />
    </svg>
    <TaskSearch>
      <svg width="17" height="17" viewBox="0 0 17 17" fill="none" stroke="#2b2b2b" strokeWidth="2"><circle cx="7.3" cy="7.3" r="6" /><path d="M11.500 11.500l4.700 4.700" /></svg>
      <span>Search</span>
    </TaskSearch>
    <AppIcons />
    <Tray>
      <svg width="12" height="8" viewBox="0 0 12 8" fill="none" stroke="#fff" strokeWidth="1.6"><path d="M1 7l5-5.500L11 7" /></svg>
      <TrayStack $width={57} $left={20} $right={0} $align="left">
        <svg width="19" height="15" viewBox="0 0 19 15"><path d="M4.500 13.500a4.300 4.300 0 0 1-.3-8.500A5.500 5.500 0 0 1 14.500 6a3.800 3.800 0 0 1 0 7.500z" fill="#8c8a88" /><path d="M1.500.5l16 14" stroke="#2a2724" strokeWidth="3" /><path d="M2.500 0l15.500 14" stroke="#ddd" strokeWidth="1.3" /></svg>
      </TrayStack>
      <TrayStack $width={60} $left={-36} $right={2} $align="center">ENG<br />IN</TrayStack>
      <TrayIcons>
        <svg width="19" height="15" viewBox="0 0 19 15" fill="none" stroke="#fff" strokeWidth="1.5"><path d="M.8 5.500c5-5.300 12.400-5.300 17.400 0M3.600 8.500c3.500-3.600 8.300-3.600 11.800 0M6.300 11.200c2-2 4.400-2 6.400 0" /><circle cx="9.5" cy="12.8" r="1.7" fill="#fff" stroke="none" /></svg>
        <svg width="18" height="15" viewBox="0 0 18 15" fill="none" stroke="#fff" strokeWidth="1.4"><path d="M1 5h2.700L7.500 1.500v12L3.700 10H1z" strokeLinejoin="round" /><path d="M10 5c1 1.500 1 3.500 0 5M12.300 3c2 2.700 2 6.300 0 9" /><path d="M14.800 1.500c2.700 3.500 2.700 8.500 0 12" stroke="#777" /></svg>
        <svg width="19" height="12" viewBox="0 0 19 12" fill="none" stroke="#fff" strokeWidth="1.5"><rect x=".8" y=".8" width="14.5" height="10.4" rx="2.5" /><rect x="3" y="3" width="6" height="6" fill="#fff" stroke="none" /><path d="M17 4v4" strokeWidth="2.2" /></svg>
      </TrayIcons>
      <TrayStack $width={74} $left={13} $right={9} $align="right" $ls={0.15}>06:50<br />20-06-2025</TrayStack>
      <svg width="17" height="17" viewBox="0 0 17 17" fill="none" stroke="#fff" strokeWidth="1.3">
        <path d="M8.500 1.500C5 1.500 3.300 4 3.300 6.500v4L1.500 13.500h13l-1.500-3M6.300 14c.3 2.500 3.900 2.500 4.200 0" /><path d="M6 6.500h3.500L6 10.500h3.500M11.300 1h4L11.300 5.500h4" strokeWidth="1.2" />
      </svg>
    </Tray>
  </Taskbar>
);

export default function App() {
  return (
    <Screen>
      <GlobalStyle />
      <BrowserChrome />
      <Viewport>
        <Console>
          <ConsoleNav />
          <Breadcrumbs />
          <Body>
            <SideNavigation />
            <PolicyForm />
          </Body>
          <ConsoleFooter>
            <ShellIcon size={17} radius={1.5} />
            <FooterLink $width={65} $gap={6} $ls={0}>CloudShell</FooterLink>
            <FooterLink $width={57} $gap={27} $ls={-0.13}>Feedback</FooterLink>
            <Copyright>© 2025, Amazon Web Services, Inc. or its affiliates.</Copyright>
            <FooterLink $width={43} $gap={33} $ls={-0.12}>Privacy</FooterLink>
            <FooterLink $width={36} $gap={28} $ls={-0.28}>Terms</FooterLink>
            <FooterLink $width={114} $gap={27} $ls={-0.21}>Cookie preferences</FooterLink>
          </ConsoleFooter>
        </Console>
        <ScrollTrack>
          <svg width="10" height="8" viewBox="0 0 10 8"><path d="M5 0l5 8H0z" fill="#8b8b8b" /></svg>
          <ScrollThumb />
          <svg width="10" height="8" viewBox="0 0 10 8"><path d="M0 0h10L5 8z" fill="#8b8b8b" /></svg>
        </ScrollTrack>
      </Viewport>
      <WindowsTaskbar />
    </Screen>
  );
}
